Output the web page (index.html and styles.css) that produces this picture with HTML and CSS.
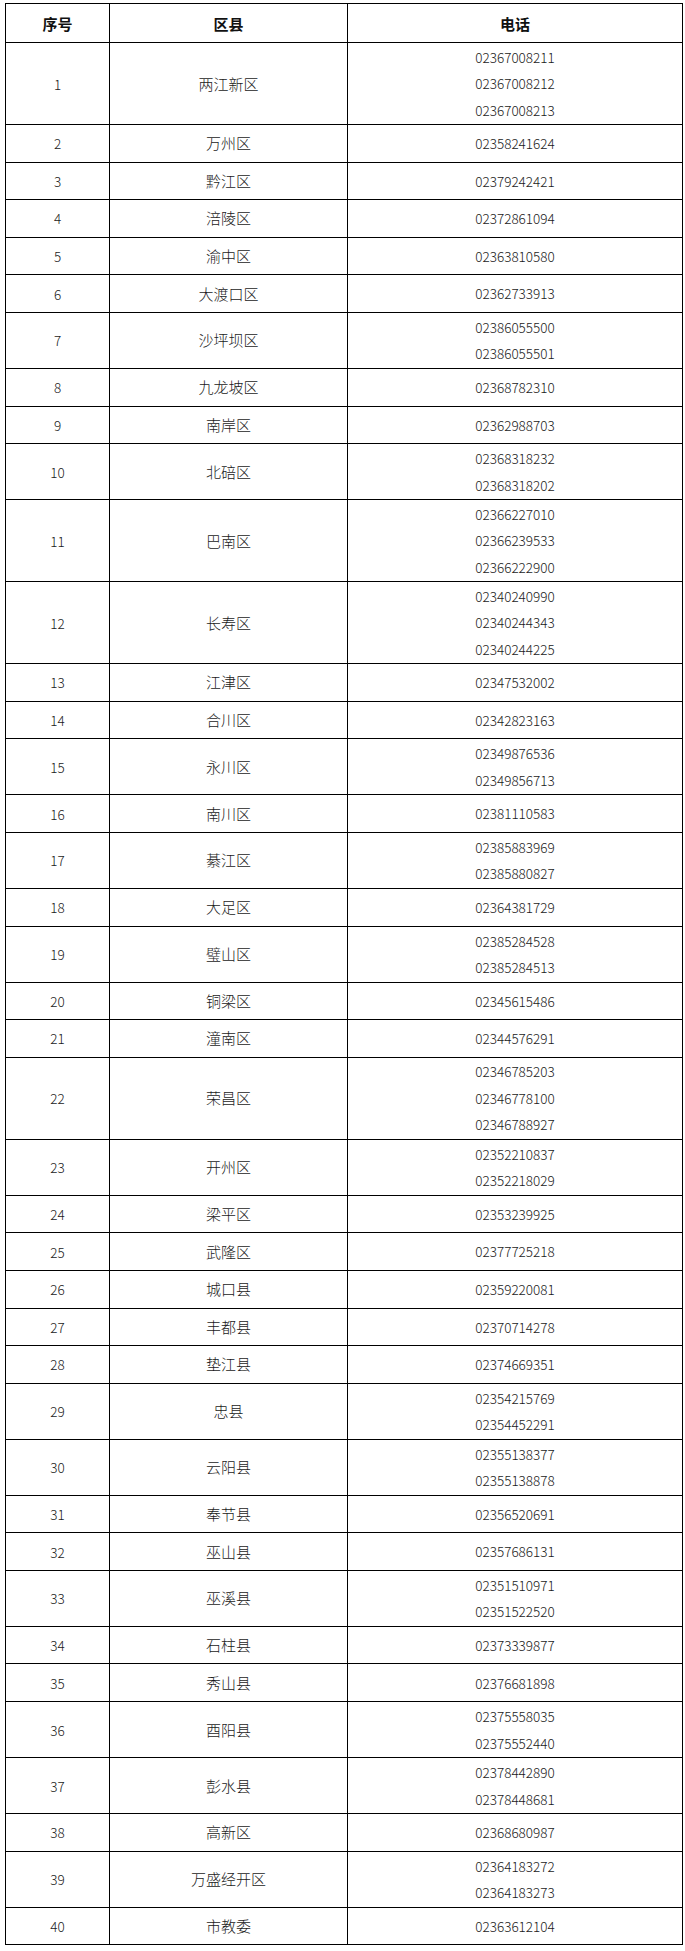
FILE: index.html
```html
<!DOCTYPE html>
<html lang="zh-CN">
<head>
<meta charset="utf-8">
<title>区县电话</title>
<link rel="stylesheet" href="styles.css">
</head>
<body>
<table class="tbl">
<colgroup><col class="c-no"><col class="c-area"><col class="c-tel"></colgroup>
<thead>
<tr class="hd"><th>序号</th><th>区县</th><th>电话</th></tr>
</thead>
<tbody>
<tr class="r3"><td class="no">1</td><td>两江新区</td><td class="tel"><div>02367008211</div><div>02367008212</div><div>02367008213</div></td></tr>
<tr class="r1"><td class="no">2</td><td>万州区</td><td class="tel"><div>02358241624</div></td></tr>
<tr class="r1"><td class="no">3</td><td>黔江区</td><td class="tel"><div>02379242421</div></td></tr>
<tr class="r1"><td class="no">4</td><td>涪陵区</td><td class="tel"><div>02372861094</div></td></tr>
<tr class="r1"><td class="no">5</td><td>渝中区</td><td class="tel"><div>02363810580</div></td></tr>
<tr class="r1"><td class="no">6</td><td>大渡口区</td><td class="tel"><div>02362733913</div></td></tr>
<tr class="r2"><td class="no">7</td><td>沙坪坝区</td><td class="tel"><div>02386055500</div><div>02386055501</div></td></tr>
<tr class="r1"><td class="no">8</td><td>九龙坡区</td><td class="tel"><div>02368782310</div></td></tr>
<tr class="r1"><td class="no">9</td><td>南岸区</td><td class="tel"><div>02362988703</div></td></tr>
<tr class="r2"><td class="no">10</td><td>北碚区</td><td class="tel"><div>02368318232</div><div>02368318202</div></td></tr>
<tr class="r3"><td class="no">11</td><td>巴南区</td><td class="tel"><div>02366227010</div><div>02366239533</div><div>02366222900</div></td></tr>
<tr class="r3"><td class="no">12</td><td>长寿区</td><td class="tel"><div>02340240990</div><div>02340244343</div><div>02340244225</div></td></tr>
<tr class="r1"><td class="no">13</td><td>江津区</td><td class="tel"><div>02347532002</div></td></tr>
<tr class="r1"><td class="no">14</td><td>合川区</td><td class="tel"><div>02342823163</div></td></tr>
<tr class="r2"><td class="no">15</td><td>永川区</td><td class="tel"><div>02349876536</div><div>02349856713</div></td></tr>
<tr class="r1"><td class="no">16</td><td>南川区</td><td class="tel"><div>02381110583</div></td></tr>
<tr class="r2"><td class="no">17</td><td>綦江区</td><td class="tel"><div>02385883969</div><div>02385880827</div></td></tr>
<tr class="r1"><td class="no">18</td><td>大足区</td><td class="tel"><div>02364381729</div></td></tr>
<tr class="r2"><td class="no">19</td><td>璧山区</td><td class="tel"><div>02385284528</div><div>02385284513</div></td></tr>
<tr class="r1"><td class="no">20</td><td>铜梁区</td><td class="tel"><div>02345615486</div></td></tr>
<tr class="r1"><td class="no">21</td><td>潼南区</td><td class="tel"><div>02344576291</div></td></tr>
<tr class="r3"><td class="no">22</td><td>荣昌区</td><td class="tel"><div>02346785203</div><div>02346778100</div><div>02346788927</div></td></tr>
<tr class="r2"><td class="no">23</td><td>开州区</td><td class="tel"><div>02352210837</div><div>02352218029</div></td></tr>
<tr class="r1"><td class="no">24</td><td>梁平区</td><td class="tel"><div>02353239925</div></td></tr>
<tr class="r1"><td class="no">25</td><td>武隆区</td><td class="tel"><div>02377725218</div></td></tr>
<tr class="r1"><td class="no">26</td><td>城口县</td><td class="tel"><div>02359220081</div></td></tr>
<tr class="r1"><td class="no">27</td><td>丰都县</td><td class="tel"><div>02370714278</div></td></tr>
<tr class="r1"><td class="no">28</td><td>垫江县</td><td class="tel"><div>02374669351</div></td></tr>
<tr class="r2"><td class="no">29</td><td>忠县</td><td class="tel"><div>02354215769</div><div>02354452291</div></td></tr>
<tr class="r2"><td class="no">30</td><td>云阳县</td><td class="tel"><div>02355138377</div><div>02355138878</div></td></tr>
<tr class="r1"><td class="no">31</td><td>奉节县</td><td class="tel"><div>02356520691</div></td></tr>
<tr class="r1"><td class="no">32</td><td>巫山县</td><td class="tel"><div>02357686131</div></td></tr>
<tr class="r2"><td class="no">33</td><td>巫溪县</td><td class="tel"><div>02351510971</div><div>02351522520</div></td></tr>
<tr class="r1"><td class="no">34</td><td>石柱县</td><td class="tel"><div>02373339877</div></td></tr>
<tr class="r1"><td class="no">35</td><td>秀山县</td><td class="tel"><div>02376681898</div></td></tr>
<tr class="r2"><td class="no">36</td><td>酉阳县</td><td class="tel"><div>02375558035</div><div>02375552440</div></td></tr>
<tr class="r2"><td class="no">37</td><td>彭水县</td><td class="tel"><div>02378442890</div><div>02378448681</div></td></tr>
<tr class="r1"><td class="no">38</td><td>高新区</td><td class="tel"><div>02368680987</div></td></tr>
<tr class="r2"><td class="no">39</td><td>万盛经开区</td><td class="tel"><div>02364183272</div><div>02364183273</div></td></tr>
<tr class="r1"><td class="no">40</td><td>市教委</td><td class="tel"><div>02363612104</div></td></tr>
</tbody>
</table>
</body>
</html>
```

FILE: styles.css
```css
html, body {
  margin: 0;
  padding: 0;
  background: #ffffff;
}

body {
  padding: 3px 0 0 5px;
  font-family: "Noto Sans CJK SC", "Noto Sans", sans-serif;
  color: #1a1a1a;
}

.tbl {
  border-collapse: collapse;
  table-layout: fixed;
  width: 677px;
  font-size: 15px;
}

.c-no { width: 104px; }
.c-area { width: 238px; }
.c-tel { width: 335px; }

.tbl th,
.tbl td {
  border: 1px solid #000000;
  padding: 0;
  text-align: center;
  vertical-align: middle;
  line-height: 20px;
}

.tbl td {
  font-weight: 300;
}

.tbl th {
  font-weight: 700;
  font-size: 15px;
  padding-top: 2px;
  color: #111111;
}

.hd { height: 39px; }
.r1 { height: 37.6px; }
.r2 { height: 56px; }
.r3 { height: 82px; }

.no {
  font-size: 13.5px;
}

.tel {
  font-size: 13.5px;
}

.tel div {
  line-height: 26.5px;
}
```
